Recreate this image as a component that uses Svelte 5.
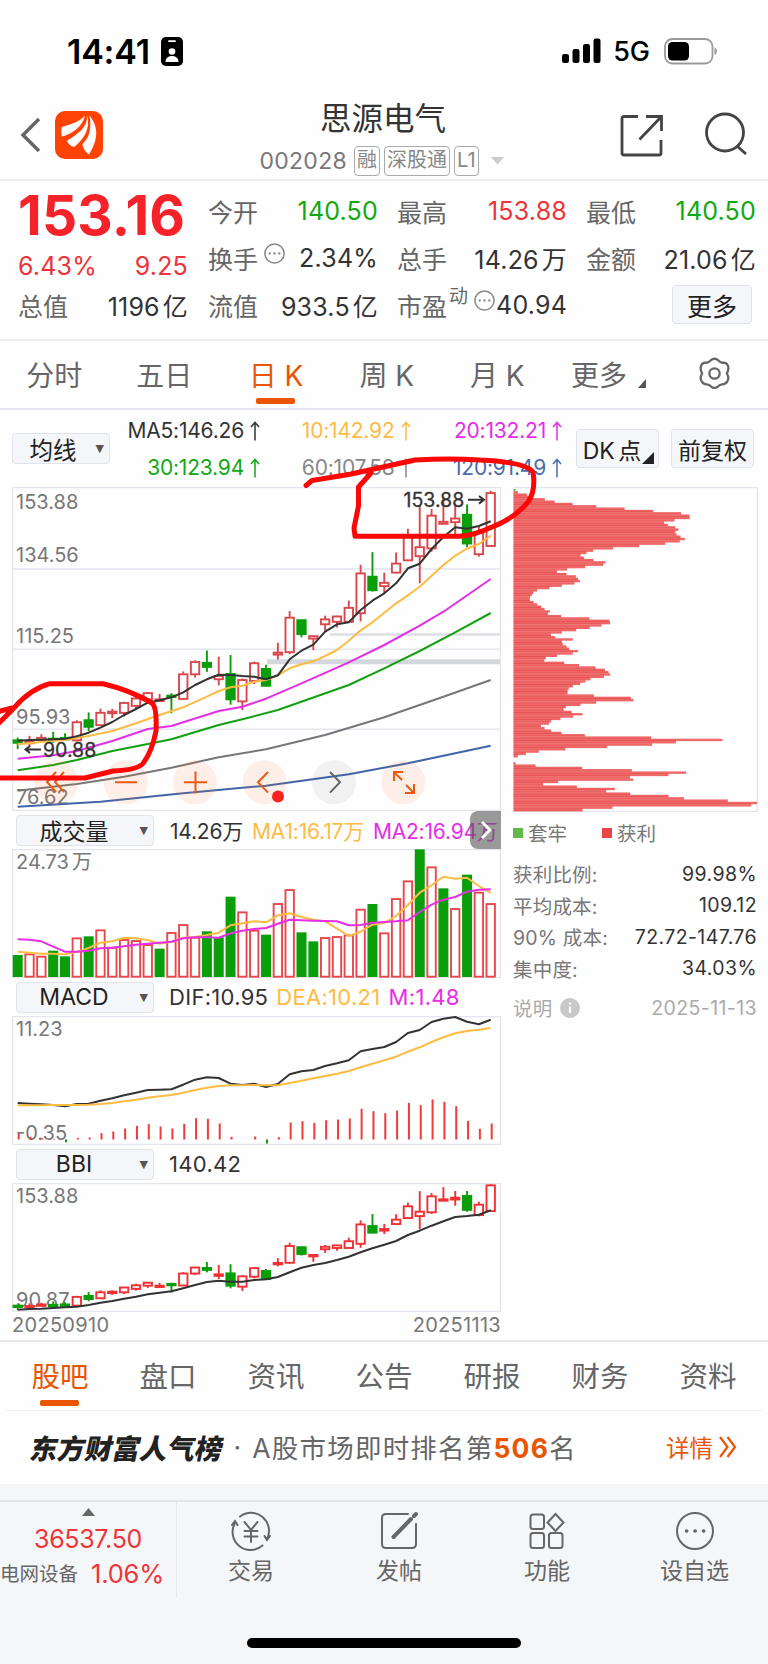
<script lang="ts">
  type Candle = [number, number, number, number, boolean];

  const STEP = 11.825;
  const X0 = 5.7;
  const CHART_W = 489;
  const TOP_PRICE = 153.88;

  let period = $state(2);
  let section = $state(0);

  const periods = ['分时', '五日', '日 K', '周 K', '月 K', '更多'];
  const sections = ['股吧', '盘口', '资讯', '公告', '研报', '财务', '资料'];

  // high, body top, body bottom, low, rising
  const candles: Candle[] = [
    [93.64, 93, 92.4, 90.88, false], [94.1, 92.8, 92.3, 91.5, true], [94.5, 93.6, 93.1, 92.9, true],
    [95.1, 93.4, 93.1, 92.4, false], [94.7, 93.6, 93.2, 93, false], [97.9, 97.4, 93, 92.7, true],
    [99.8, 97.9, 96.3, 95.2, false], [100.7, 99.7, 96.7, 96.6, true], [100.7, 100, 99.6, 98.4, true],
    [102.4, 102.1, 99.7, 98.8, true], [104, 103.2, 101.4, 100.6, true], [104.8, 104.5, 103, 101.9, true],
    [104.3, 103, 102.6, 102.4, true], [104.5, 103.9, 103.6, 99.6, false], [109.8, 109.1, 103.1, 103, true],
    [112.5, 112.1, 109.1, 108.3, true], [114.9, 111.9, 110.9, 109.7, false], [113.4, 108.7, 107.9, 106.4, true],
    [113.8, 109.2, 103, 101.7, false], [108.1, 107.7, 102.5, 100.4, true], [112.2, 111.8, 107.5, 106.7, true],
    [111.4, 110.4, 106.3, 106.1, false], [116.8, 114.4, 113.9, 112.7, true], [124.5, 122.9, 114.5, 114, true],
    [122.3, 122.3, 118.9, 118.1, false], [118.5, 118.4, 117.8, 115, true], [123.4, 122.5, 121.3, 119.4, true],
    [123.4, 123.2, 121.9, 120.5, true], [127.1, 125.3, 121.9, 121.7, true], [135.8, 133.7, 124, 122, true],
    [138.9, 132.9, 129.6, 129.3, false], [133.9, 131.4, 130.6, 128.9, true], [138.8, 136.1, 133.9, 133.7, true],
    [144.6, 142.8, 136.9, 136.7, true], [150.4, 140.1, 137.9, 131.3, true], [149.4, 147.8, 139.8, 139, true],
    [152.4, 146.3, 145.8, 145.7, true], [150.5, 147.1, 146.2, 143.1, true], [150.5, 148, 141, 140.1, false],
    [145.1, 143.6, 138.4, 137.8, true], [153.88, 153.3, 140.4, 140.2, true],
  ];

  const ma5 = [253.7, 253, 252.7, 252.3, 251.7, 249.3, 245.7, 240.7, 235, 228, 222, 215.7, 213.3, 210.3, 205.3, 198, 192.3, 187.7, 188, 189, 189.7, 192.3, 188.3, 172.3, 163.7, 157.7, 144.7, 137.3, 135.3, 123, 113.7, 106.3, 96.3, 81.3, 76.7, 62, 50, 40.3, 41.7, 39, 34.3];
  const ma10 = [[0, 257.3], [2, 255], [4, 253], [6, 249], [8, 244], [10, 236.3], [12, 228], [14, 220.3], [16, 209.7], [17, 204], [18, 200.3], [19, 198.7], [20, 194.7], [21, 193], [22, 188.3], [23, 181.3], [24, 177.3], [25, 174.3], [26, 169], [27, 163], [28, 153.7], [29, 143.3], [30, 135.3], [31, 125.7], [32, 116.3], [33, 108.3], [34, 99.7], [35, 88.7], [36, 78], [37, 68.7], [38, 61.7], [39, 57], [40, 48.7]];
  const ma20 = [[0, 271.7], [3, 268.3], [5, 264], [8, 254], [11, 242], [13, 239], [17, 224], [19, 219.7], [21, 211.7], [24, 196.3], [28, 175.3], [31, 158], [34, 138.7], [36, 124.7], [40, 92]];
  const ma30 = [[0, 283.3], [3, 278], [5, 273], [8, 264], [11, 257], [13, 252.3], [17, 238], [19, 232.3], [22, 223], [28, 198], [31, 181.3], [34, 164], [37, 145.3], [40, 126]];
  const ma60 = [[0, 303.7], [5, 297], [9, 289.7], [13, 280.7], [17, 270.3], [21, 262.3], [26, 248], [31, 230.3], [36, 209.7], [40, 193]];
  const ma120 = [[0, 319.7], [7, 314.7], [14, 306.3], [21, 298.7], [28, 287.3], [33, 276.3], [40, 258.7]];

  const volumes = [66, 70, 63, 79, 62, 118, 122, 142, 90, 113, 110, 98, 85, 134, 158, 120, 137, 119, 241, 196, 141, 127, 221, 263, 134, 107, 119, 122, 127, 204, 219, 133, 236, 289, 383, 331, 266, 206, 307, 255, 221];
  const volDown = [0, 3, 4, 6, 12, 16, 17, 18, 21, 24, 25, 30, 34, 36, 38];
  const volMa1 = [427, 430, 433, 433, 435, 428, 416, 400, 396, 385, 387, 392, 403, 397, 385, 383, 377, 370, 348, 342, 336, 339, 318, 312, 323, 331, 336, 358, 380, 367, 346, 341, 320, 287, 250, 228, 202, 208, 205, 230, 251];
  const volMa2 = [390, 391, 396, 412, 427, 427, 424, 417, 415, 411, 406, 403, 400, 397, 387, 384, 384, 385, 372, 364, 359, 356, 343, 331, 333, 334, 335, 336, 348, 347, 340, 338, 336, 333, 308, 286, 271, 263, 247, 241, 240];

  const dif = [371, 373, 375, 377, 381, 374, 373, 364, 357, 348, 340, 332, 331, 330, 316, 301, 294, 296, 313, 317, 313, 323, 314, 285, 276, 272, 260, 252, 243, 216, 209, 203, 188, 161, 152, 128, 118, 113, 127, 135, 121];
  const dea = [378, 378, 378, 377, 377, 377, 376, 374, 371, 366, 361, 355, 351, 347, 340, 332, 325, 320, 318, 318, 317, 318, 318, 311, 304, 297, 290, 283, 275, 264, 253, 243, 232, 217, 204, 188, 174, 162, 155, 151, 146];
  const macd = [18, 8, 4, 2, -8, 5, 6, 19, 24, 33, 41, 46, 39, 33, 47, 64, 62, 48, 8, 0, 9, -12, 7, 51, 55, 50, 58, 60, 63, 92, 85, 79, 87, 110, 103, 120, 113, 100, 56, 32, 48];
  const bbi = [482, 480, 479, 477, 475, 473, 468, 461, 456, 449, 443, 436, 431, 427, 418, 408, 399, 395, 398, 398, 393, 391, 384, 370, 356, 348, 342, 333, 323, 310, 298, 287, 276, 258, 245, 230, 217, 204, 201, 197, 184];

  // cost distribution, one row per price level
  const chips = [
    13, 40, 53, 94, 123, 177, 248, 333, 419, 503, 528, 529, 483, 452, 463, 485, 495, 485, 489, 501, 514, 499, 455, 377, 299,
    239, 219, 201, 211, 240, 276, 269, 215, 161, 130, 159, 187, 193, 199, 183, 145, 108, 71, 60, 55, 49, 49, 60, 71, 83, 93,
    109, 103, 143, 228, 288, 290, 264, 229, 188, 145, 112, 124, 178, 145, 148, 159, 167, 193, 178, 131, 97, 92, 152, 197,
    246, 274, 285, 290, 271, 231, 216, 200, 178, 166, 162, 162, 241, 352, 360, 248, 201, 157, 150, 174, 207, 179, 141, 113,
    107, 82, 93, 113, 144, 214, 413, 627, 487, 416, 281, 156, 76, 37, 13, 0, 0, 6, 66, 206, 355, 518, 465, 349, 359, 134,
    89, 190, 304, 278, 350, 465, 511, 643, 731, 713, 297, 207,
  ];

  const costs = [
    ['获利比例:', '99.98%'],
    ['平均成本:', '109.12'],
    ['90% 成本:', '72.72-147.76'],
    ['集中度:', '34.03%'],
  ];

  const x = (i: number) => X0 + STEP * i;
  const poly = (pts: number[][]) => pts.map(([i, y]) => `${x(i).toFixed(1)},${y}`).join(' ');
  const series = (ys: number[], top: number) => ys.map((y, i) => `${x(i).toFixed(1)},${((y - top) / 3).toFixed(1)}`).join(' ');
</script>

{#snippet candleSet(k: number, offset: number)}
  {#each candles as [high, top, bottom, low, up], i}
    {@const yt = offset + (TOP_PRICE - top) * k}
    {@const yb = offset + (TOP_PRICE - bottom) * k}
    <g class={up ? 'up' : 'down'}>
      <line x1={x(i)} x2={x(i)} y1={offset + (TOP_PRICE - high) * k} y2={yt} />
      <line x1={x(i)} x2={x(i)} y1={yb} y2={offset + (TOP_PRICE - low) * k} />
      <rect x={x(i) - 4.2} y={yt} width="8.4" height={Math.max(yb - yt, 1.4)} />
    </g>
  {/each}
{/snippet}

{#snippet dots()}
  <svg class="dots" viewBox="0 0 24 24"><circle cx="12" cy="12" r="10" /><path d="M7 12h.1M12 12h.1M17 12h.1" /></svg>
{/snippet}

{#snippet rise()}
  <svg class="rise" viewBox="0 0 10 20"><path d="M5 19.500V1.500M1 6l4-4.500L9 6" /></svg>
{/snippet}

<div class="phone">
  <div class="status">
    <span class="clock">14:41</span>
    <svg class="badge" width="22" height="29" viewBox="0 0 22 29">
      <rect width="22" height="29" rx="5" />
      <path d="M8 4.200h6" stroke="#fff" stroke-width="1.800" stroke-linecap="round" />
      <circle cx="11" cy="14.500" r="3.300" fill="#fff" />
      <path d="M4.500 25c0-4 3-6 6.500-6s6.500 2 6.500 6z" fill="#fff" />
    </svg>
    <svg class="signal" width="39" height="26" viewBox="0 0 39 26">
      <rect x="0" y="16" width="7" height="9" rx="2.200" />
      <rect x="10.500" y="11" width="7" height="14" rx="2.200" />
      <rect x="21" y="6" width="7" height="19" rx="2.200" />
      <rect x="31.500" y="0.500" width="7" height="24.500" rx="2.200" />
    </svg>
    <span class="net">5G</span>
    <svg width="54" height="27" viewBox="0 0 54 27">
      <rect x="1" y="1" width="47.500" height="24.500" rx="7.500" fill="none" stroke="#999" stroke-width="1.800" />
      <rect x="4" y="4" width="21" height="18.500" rx="4.500" />
      <path d="M50.500 9.500c3.200 1 3.200 6.500 0 7.500z" fill="#999" />
    </svg>
  </div>

  <header>
    <svg class="back" width="22" height="36" viewBox="0 0 22 36"><path d="M19 2L3 18l16 16" /></svg>
    <svg class="logo" width="48" height="48" viewBox="0 0 48 48">
      <rect width="48" height="48" rx="10" fill="#ff4306" />
      <path d="M30 4.500C25 11 13 14 7 16c-1 3-1 6 0 9.500C16 23 27 17 30 4.500z" fill="#fff" />
      <path d="M32 4.500c1 11-9 19-20 25 1 3 3 5.500 7 6.500C28 29 36 18 32 4.500z" fill="#fff" />
      <path d="M34.500 4.500C37 18 34 27 27.500 33c0 4 3 8 6.500 10.500 8-13 11-26 .500-39z" fill="#fff" />
    </svg>
    <div class="title">
      <h1>思源电气</h1>
      <div class="code">
        <span>002028</span>
        <i class="tag">融</i>
        <i class="tag">深股通</i>
        <i class="tag">L1</i>
        <svg width="13" height="8" viewBox="0 0 13 8"><path d="M0 0h13L6.500 7.500z" fill="#ccc" /></svg>
      </div>
    </div>
    <svg class="share" width="44" height="44" viewBox="0 0 44 44">
      <path d="M18 2.500H4q-2 0-2 2V39q0 2 2 2h35q2 0 2-2V26M26 2.500h15.500V17M41 3L19.500 25.500" />
    </svg>
    <svg class="search" width="44" height="44" viewBox="0 0 44 44">
      <circle cx="21" cy="20.500" r="18.500" /><path d="M33 34l9 8" />
    </svg>
  </header>

  <section class="quote">
    <div class="last">
      <strong>153.16</strong>
      <div class="pair red change"><span>6.43%</span><span>9.25</span></div>
      <div class="pair"><label>总值</label><span>1196<b>亿</b></span></div>
    </div>
    <div class="stats">
      <div class="pair"><label>今开</label><span class="green">140.50</span></div>
      <div class="pair"><label>最高</label><span class="red">153.88</span></div>
      <div class="pair"><label>最低</label><span class="green">140.50</span></div>
      <div class="pair"><label>换手{@render dots()}</label><span>2.34%</span></div>
      <div class="pair"><label>总手</label><span>14.26<b>万</b></span></div>
      <div class="pair"><label>金额</label><span>21.06<b>亿</b></span></div>
      <div class="pair"><label>流值</label><span>933.5<b>亿</b></span></div>
      <div class="pair"><label>市盈<sup>动</sup>{@render dots()}</label><span>40.94</span></div>
      <div class="pair end"><button class="box more">更多</button></div>
    </div>
  </section>

  <nav class="periods">
    {#each periods as p, i}
      <button class:active={period === i} onclick={() => (period = i)}>
        {p}{#if i === 5}<svg class="corner" width="8" height="9" viewBox="0 0 8 9"><path d="M8 0v9H0z" /></svg>{/if}
      </button>
    {/each}
    <button aria-label="设置">
      <svg class="gear" width="33" height="33" viewBox="0 0 32 32">
        <path d="M12 3.500Q16 0 20 3.500q2 2.500 5 2 4 .5 4.500 5 0 3-1.500 5.500 2.500 4 .5 7.500-1.500 3-5 3-2.500 0-4 2Q16 31.500 12.500 28.500q-1.500-2-4-2-3.500 0-5-3-2-3.500.5-7.500-1.500-2.500-1.500-5.500.5-4.500 4.500-5 3 .5 5-2z" />
        <circle cx="16" cy="16" r="5" />
      </svg>
    </button>
  </nav>

  <div class="averages">
    <button class="box pick">均线<i class="tri">▼</i></button>
    <div class="ma">
      <span class="c5">MA5:146.26{@render rise()}</span>
      <span class="c10">10:142.92{@render rise()}</span>
      <span class="c20">20:132.21{@render rise()}</span>
      <span class="c30">30:123.94{@render rise()}</span>
      <span class="c60">60:107.58{@render rise()}</span>
      <span class="c120">120:91.49{@render rise()}</span>
    </div>
    <button class="box dk">DK 点<svg class="corner" width="12" height="12" viewBox="0 0 12 12"><path d="M12 0v12H0z" fill="#222" /></svg></button>
    <button class="box fq">前复权</button>
  </div>

  <main>
    <div class="charts">
      <svg class="chart" width={CHART_W} height="324" viewBox="0 0 489 324">
        <path class="grid" d="M.5.5h488v323H.5zM0 82h489M0 162.300h489M0 242.300h489" />
        <path d="M318 147.500h170" stroke="#dcdee6" stroke-width="2.500" />
        <path d="M255 174.700h233" stroke="#d5d7df" stroke-width="5" />
        <g class="labels">
          <text x="4" y="22">153.88</text>
          <text x="4" y="75">134.56</text>
          <text x="4" y="156">115.25</text>
          <text x="4" y="237">95.93</text>
          <text x="4" y="317">76.62</text>
        </g>
        {@render candleSet(4.1, 3.7)}
        <g class="lines">
          <polyline points={poly(ma120)} stroke="#4166a8" />
          <polyline points={poly(ma60)} stroke="#777" />
          <polyline points={poly(ma30)} stroke="#12a012" />
          <polyline points={poly(ma20)} stroke="#e52ee5" />
          <polyline points={poly(ma10)} stroke="#fcbc44" />
          <polyline points={ma5.map((y, i) => `${x(i)},${y}`).join(' ')} stroke="#333" />
        </g>
        <g class="marks">
          <text x="391.500" y="19.500">153.88</text>
          <path d="M456 12.800h15M467 9l5 3.800-5 3.800" />
          <text x="31" y="269.500">90.88</text>
          <path d="M29 262.500H14M18 259l-4.500 3.500 4.500 3.500" />
        </g>
        <g class="controls">
          {#each [44.3, 113.7, 183, 252.7, 322, 391.3] as cx, i}
            <circle {cx} cy="295.300" r="22" class:off={i === 4} />
          {/each}
          <path d="M44 285l-9 10 9 10M52 285l-9 10 9 10" />
          <path d="M103 295.300h22M172 295.300h23M183.500 284.500v22" />
          <path d="M256 285l-10 10.300 10 10.300" />
          <path class="next" d="M318 285l10 10.300-10 10.300" />
          <path d="M382 294v-9h9M382 285l8 8M402 297v9h-9M402 306l-8-8" />
          <circle cx="266" cy="309.500" r="6" class="dot" />
        </g>
      </svg>

      <div class="bar">
        <button class="box ind">成交量<i class="tri">▼</i></button>
        <span>14.26万</span><span class="c10">MA1:16.17万</span><span class="c20">MA2:16.94万</span>
        <div class="slide"><svg width="12" height="20" viewBox="0 0 12 20"><path d="M2 2l8 8-8 8" /></svg></div>
      </div>
      <svg class="chart" width={CHART_W} height="129" viewBox="0 0 489 129">
        <path class="grid" d="M.5.5h488v128H.5z" />
        <g class="labels"><text x="4" y="20">24.73</text><text x="60" y="20">万</text></g>
        {#each volumes as v, i}
          {@const down = volDown.includes(i)}
          <rect class={down ? 'vdown' : 'vup'} x={x(i) - (down ? 5 : 4.2)} y={128 - v / 3 + (down ? 0 : 0.7)} width={down ? 10 : 8.4} height={v / 3 - (down ? 0 : 1)} />
        {/each}
        <g class="lines">
          <polyline points={series(volMa1, 119)} stroke="#fcbc44" />
          <polyline points={series(volMa2, 119)} stroke="#e52ee5" />
        </g>
      </svg>

      <div class="bar wide">
        <button class="box ind">MACD<i class="tri">▼</i></button>
        <span>DIF:10.95</span><span class="c10">DEA:10.21</span><span class="c20">M:1.48</span>
      </div>
      <svg class="chart" width={CHART_W} height="129" viewBox="0 0 489 129">
        <path class="grid" d="M.5.5h488v128H.5z" />
        <g class="labels"><text x="4" y="20">11.23</text><text x="4" y="124">-0.35</text></g>
        {#each macd as m, i}
          <line x1={x(i) + 1} x2={x(i) + 1} y1="123.500" y2={123.5 - m / 3} stroke={m > 0 ? '#ef3b3b' : '#0aa00a'} stroke-width="2" />
        {/each}
        <g class="lines">
          <polyline points={series(dif, 110)} stroke="#333" />
          <polyline points={series(dea, 110)} stroke="#fcbc44" />
        </g>
      </svg>

      <div class="bar wide">
        <button class="box ind">BBI<i class="tri">▼</i></button>
        <span>140.42</span>
      </div>
      <svg class="chart bbi" width={CHART_W} height="129" viewBox="0 0 489 129">
        <path class="grid" d="M.5.5h488v128H.5z" />
        <g class="labels"><text x="4" y="20">153.88</text><text x="4" y="124">90.87</text></g>
        {@render candleSet(1.995, 1.2)}
        <g class="lines"><polyline points={series(bbi, 102)} stroke="#333" /></g>
      </svg>
      <div class="dates"><span>20250910</span><span>20251113</span></div>
    </div>

    <aside>
      <svg width="245" height="325" viewBox="0 0 245 325">
        <path class="grid" d="M0 .5h244.500v324H0" />
        <rect x="0.500" y="2" width="2" height="2" fill="#5cc13f" />
        {#each chips as c, i}
          {@const y = 4.1 + i * 2.336}
          <rect x="0.500" {y} width={c / 3} height="2.400" fill="#ee6868" />
          <rect x="0.500" y={y + 1.7} width={Math.min(c, chips[i + 1] ?? c) / 3} height="0.700" fill="#e6484b" />
        {/each}
      </svg>
      <div class="legend"><i class="g"></i>套牢<i class="r"></i>获利</div>
      {#each costs as [name, value]}
        <div class="cost"><span>{name}</span><em>{value}</em></div>
      {/each}
      <div class="cost note"><span>说明 <svg width="20" height="20" viewBox="0 0 20 20"><circle cx="10" cy="10" r="10" fill="#c8c8c8" /><path d="M10 8.500V15M10 4.600v2" stroke="#fff" stroke-width="2.200" /></svg></span><em>2025-11-13</em></div>
    </aside>

    <svg class="ink" width="768" height="400" viewBox="0 440 768 400">
      <path d="M306 484.500L312 479.500L350 473.300L415 459Q450 457 480 459Q525 461 533 471Q536 490 528 501Q515 517 492 526Q475 534 460 535.300H355L354 527L358.500 505V486L371 472" />
      <path d="M-3 711L12 707M-3 724L14 707Q30 688 50 682.700H103Q130 689 152 702Q157 706 156 730Q152 750 144 761Q140 769 113 770L85 777H-3" />
    </svg>
  </main>

  <nav class="sections">
    {#each sections as s, i}
      <button class:active={section === i} onclick={() => (section = i)}>{s}</button>
    {/each}
  </nav>

  <div class="rank">
    <b>东方财富人气榜</b><span class="mid">·</span>
    <span>A股市场即时排名第<strong>506</strong>名</span>
    <a href="#rank">详情<svg width="19" height="22" viewBox="0 0 19 22"><path d="M2 1l7.500 10L2 21M9.500 1L17 11 9.500 21" /></svg></a>
  </div>

  <footer>
    <div class="dock">
      <div class="index">
        <svg width="13" height="8" viewBox="0 0 13 8"><path d="M0 8h13L6.500 0z" fill="#666" /></svg>
        <span class="points">36537.50</span>
        <div><small>电网设备</small><span class="pct">1.06%</span></div>
      </div>
      <a href="#trade">
        <svg width="44" height="40" viewBox="0 0 44 40">
          <path d="M11 5.500A18 18 0 0 1 38 28M41 25l-3 4-2.500-4M33.500 34.500A18 18 0 0 1 6 12M3 14l3-4 2.500 4" />
          <path d="M15.500 11l6.500 8 6.500-8M22 19v12M15.500 20h13M15.500 25.500h13" />
        </svg>
        交易
      </a>
      <a href="#post">
        <svg width="40" height="40" viewBox="0 0 40 40">
          <path d="M29 3H7q-4 0-4 4v26q0 4 4 4h26q4 0 4-4V13" />
          <path d="M14.500 26L32 8M35 5l2-2" stroke-width="4" />
        </svg>
        发帖
      </a>
      <a href="#tools">
        <svg width="40" height="40" viewBox="0 0 40 40">
          <rect x="3.500" y="3.500" width="13.500" height="14.500" rx="2.500" /><rect x="3.500" y="22" width="13.500" height="15" rx="2.500" />
          <rect x="22" y="22" width="13.500" height="15" rx="2.500" /><path d="M28.500 3l8 8.500-8 8.500-8-8.500z" />
        </svg>
        功能
      </a>
      <a href="#watch">
        <svg width="40" height="40" viewBox="0 0 40 40">
          <circle cx="20" cy="20" r="18" /><path d="M11.500 20h.2M20 20h.2M28.500 20h.2" stroke-width="3.600" />
        </svg>
        设自选
      </a>
    </div>
    <div class="home"></div>
  </footer>
</div>

<style>
  :global(body) {
    margin: 0;
    background: #fefefe;
  }
  .phone {
    width: 768px;
    height: 1664px;
    display: flex;
    flex-direction: column;
    overflow: hidden;
    background: #fefefe;
    color: #333;
    font-family: Inter, "Noto Sans CJK SC", sans-serif;
    white-space: nowrap;
  }
  .phone > * {
    flex: none;
    box-sizing: border-box;
  }
  svg {
    display: block;
    fill: none;
    flex: none;
  }
  button {
    font: inherit;
    color: inherit;
    background: none;
    border: 0;
    padding: 0;
  }
  a {
    color: inherit;
    text-decoration: none;
  }
  i, em {
    font-style: normal;
  }
  .red { color: #ee3338; }
  .green { color: #12a812; }
  .c10 { color: #fcbc44; }
  .c20 { color: #e52ee5; }
  .c30 { color: #12a812; }
  .c60 { color: #888; }
  .c120 { color: #4a6cab; }
  .box {
    box-sizing: border-box;
    background: #f5f6f9;
    border: 1.5px solid #e1e3ea;
    border-radius: 4px;
    color: #222;
    display: flex;
    align-items: center;
    justify-content: center;
    position: relative;
  }

  .status {
    height: 100px;
    padding: 2px 50px 0 67px;
    display: flex;
    align-items: center;
    color: #000;
  }
  .status svg { fill: #000; }
  .clock {
    font-size: 34px;
    font-weight: 600;
    letter-spacing: -0.2px;
    width: 94px;
  }
  .signal { margin-left: auto; }
  .net {
    font-size: 27px;
    font-weight: 500;
    margin: 0 14px 0 12px;
  }

  header {
    height: 81px;
    display: flex;
    border-bottom: 2px solid #efeff1;
    padding: 0 20px;
  }
  .back {
    margin: 17px 13px 0 0;
    stroke: #666;
    stroke-width: 3.5;
  }
  .logo { margin-top: 11px; }
  .title {
    flex: 1;
    padding-left: 1px;
    display: flex;
    flex-direction: column;
    align-items: center;
  }
  h1 {
    font-size: 31.5px;
    line-height: 38px;
    font-weight: 400;
    margin: 0 0 8px 42px;
  }
  .code {
    display: flex;
    align-items: center;
    gap: 4px;
    font-size: 23px;
    color: #777;
    margin-left: 39px;
  }
  .code span {
    letter-spacing: 0.3px;
    margin-right: 3px;
  }
  .code svg { margin-left: 8px; }
  .tag {
    box-sizing: border-box;
    height: 30px;
    line-height: 27px;
    border: 1.5px solid #aaa;
    border-radius: 4px;
    padding: 0 2px;
    font-size: 20px;
    color: #888;
  }
  .share, .search {
    stroke: #444;
    stroke-width: 2.8;
    margin-top: 14px;
  }
  .search { margin: 12px 0 0 40px; }

  .quote {
    height: 160px;
    border-bottom: 2px solid #efeff1;
    display: flex;
    padding: 6px 12px 0 18px;
    font-size: 25px;
  }
  .last {
    width: 170px;
    margin-right: 20px;
  }
  .last strong {
    display: block;
    font-size: 55px;
    line-height: 56px;
    height: 55px;
    letter-spacing: 0.2px;
    color: #f5222a;
  }
  .change {
    margin: 0 0 -8px;
  }
  .stats {
    flex: 1;
    display: grid;
    grid-template-columns: 170px 170px 170px;
    grid-auto-rows: 47px;
    column-gap: 19px;
  }
  .pair {
    height: 47px;
    display: flex;
    align-items: center;
    justify-content: space-between;
    letter-spacing: 0.2px;
  }
  .pair b {
    font-weight: 400;
    margin-left: 3px;
  }
  .pair label {
    color: #666;
    display: flex;
    align-items: center;
    letter-spacing: 0;
  }
  sup {
    font-size: 19px;
    line-height: 20px;
    margin: -16px 0 0 2px;
  }
  .dots {
    width: 23px;
    height: 23px;
    margin: -9px 0 0 5px;
    stroke: #888;
    stroke-width: 1.6;
    stroke-linecap: round;
  }
  .dots path { stroke-width: 2.4; }
  .end { justify-content: flex-end; }
  .more {
    width: 80px;
    height: 39px;
    margin-right: 4px;
  }

  .periods {
    height: 69px;
    border-bottom: 2px solid #e3e4eb;
    display: grid;
    grid-template-columns: 108.5px 111.500px 112px 109.500px 111.500px 92px 1fr;
    font-size: 28px;
    word-spacing: -3px;
    color: #666;
    padding-bottom: 2px;
  }
  .periods button {
    display: flex;
    align-items: center;
    justify-content: center;
    position: relative;
  }
  .active { color: #ea5504; }
  .active::after {
    content: "";
    position: absolute;
    left: calc(50% - 20px);
    bottom: 2px;
    width: 39px;
    height: 6px;
    border-radius: 2px;
    background: #ea5504;
  }
  .corner { fill: #555; }
  .periods .corner {
    position: absolute;
    right: -1px;
    bottom: 18px;
  }
  .gear {
    stroke: #666;
    stroke-width: 2.2;
    margin-left: 16px;
  }

  .averages {
    height: 77px;
    display: flex;
    padding-left: 12px;
  }
  .tri {
    font-family: "DejaVu Sans", sans-serif;
    font-size: 11px;
    color: #555;
    position: absolute;
    right: 5px;
  }
  .pick {
    width: 98px;
    height: 31px;
    margin-top: 23px;
    font-size: 23.5px;
    padding-right: 16px;
  }
  .ma {
    width: 453px;
    display: grid;
    grid-template-columns: 150px 150.500px 151.500px;
    grid-template-rows: 37px 37px;
    padding-top: 2px;
    font-size: 21px;
    letter-spacing: -0.2px;
  }
  .ma span {
    display: flex;
    align-items: center;
    justify-content: flex-end;
    gap: 6px;
  }
  .rise {
    width: 10px;
    height: 20px;
    stroke: currentColor;
    stroke-width: 1.5;
  }
  .dk, .fq {
    margin: 19px 0 0 13px;
    width: 83px;
    height: 39px;
    font-size: 23px;
  }
  .dk {
    padding-right: 11px;
    word-spacing: -3px;
  }
  .dk .corner {
    position: absolute;
    right: 4px;
    bottom: 3px;
  }
  .fq { margin-left: 12px; }

  main {
    height: 855px;
    border-bottom: 2px solid #e6e7ec;
    display: flex;
    padding: 0 12px 0;
    position: relative;
  }
  .charts { width: 489px; }
  .grid {
    stroke: #e4e5ee;
    stroke-width: 1.5;
  }
  .labels text, .marks text {
    fill: #777;
    font-size: 20px;
  }
  .marks text {
    fill: #333;
    stroke: #333;
    stroke-width: 0.3;
    font-size: 19.5px;
  }
  .marks path {
    stroke: #333;
    stroke-width: 2;
  }
  .lines polyline {
    stroke-width: 2;
    stroke-linejoin: round;
  }
  .up line, .up rect { stroke: #d8484c; stroke-width: 1.9; }
  .up rect { fill: #fefefe; }
  .down line, .down rect { stroke: #0a9e0a; stroke-width: 1.9; }
  .down rect { fill: #0a9e0a; }
  .bbi .up line, .bbi .up rect { stroke: #ef3034; }
  .vup {
    fill: #fefefe;
    stroke: #e8484c;
    stroke-width: 1.9;
  }
  .vdown { fill: #0a9e0a; }
  .controls circle { fill: rgba(245, 110, 50, 0.11); }
  .controls circle.off { fill: rgba(90, 90, 90, 0.08); }
  .controls circle.dot { fill: #f5221e; }
  .controls path {
    stroke: #ea5a14;
    stroke-width: 2;
  }
  .controls .next { stroke: #666; }
  .bar {
    height: 38px;
    display: flex;
    align-items: center;
    gap: 9px;
    padding-left: 4px;
    font-size: 21px;
    letter-spacing: -0.2px;
    position: relative;
  }
  .wide {
    font-size: 22px;
    letter-spacing: 0.3px;
    gap: 8px;
  }
  .ind {
    width: 138px;
    height: 31px;
    margin-right: 7px;
    font-size: 23px;
    letter-spacing: 0;
    padding-right: 22px;
  }
  .slide {
    position: absolute;
    right: 0;
    top: 0;
    width: 31px;
    height: 38px;
    border-radius: 8px 0 0 8px;
    background: rgba(90, 90, 90, 0.62);
    display: flex;
    align-items: center;
    justify-content: center;
  }
  .slide path { stroke: #fff; stroke-width: 3; }
  .dates {
    display: flex;
    justify-content: space-between;
    font-size: 20px;
    letter-spacing: 0.3px;
    line-height: 27px;
    color: #777;
  }
  aside {
    width: 244px;
    margin-left: 12px;
    font-size: 19.5px;
    color: #777;
  }
  .legend {
    height: 41px;
    display: flex;
    align-items: center;
  }
  .legend i {
    width: 10px;
    height: 10px;
    margin-right: 5px;
    background: #5fba46;
  }
  .legend .r {
    margin-left: 35px;
    background: #ea4548;
  }
  .cost {
    height: 31.5px;
    display: flex;
    align-items: center;
    justify-content: space-between;
    letter-spacing: 0.2px;
  }
  .legend + .cost { margin-top: 5px; }
  .cost em {
    color: #333;
    letter-spacing: 0.4px;
  }
  .note {
    margin-top: 8px;
  }
  .note, .note em { color: #aaa; }
  .note span {
    display: flex;
    gap: 8px;
    align-items: center;
  }
  .ink {
    position: absolute;
    left: 0;
    top: -46px;
    pointer-events: none;
    stroke: #fd0606;
    stroke-width: 5;
    stroke-linecap: round;
    stroke-linejoin: round;
  }

  .sections {
    height: 69px;
    margin: 0 6px;
    border-bottom: 1.5px solid #eeeff3;
    display: grid;
    grid-template-columns: repeat(7, 108px);
    font-size: 28.500px;
    color: #666;
    padding-bottom: 2px;
  }
  .sections button {
    position: relative;
    padding-bottom: 2px;
  }
  .rank {
    height: 73px;
    display: flex;
    align-items: center;
    padding: 0 31px 2px 31px;
    font-size: 26.500px;
    color: #666;
  }
  .rank b {
    font-weight: 900;
    font-size: 27.500px;
    color: #222;
    transform: skewX(-12deg);
  }
  .rank .mid { margin: 0 10px 0 10px; }
  .rank span { letter-spacing: 1.2px; }
  .rank strong { color: #ea5504; }
  .rank a {
    margin-left: auto;
    display: flex;
    align-items: center;
    gap: 5px;
    font-size: 23.500px;
    color: #ea5504;
  }
  .rank a svg { stroke: #ea5504; stroke-width: 2.2; }

  footer {
    flex: 1 !important;
    background: #f5f6f8;
    padding-top: 16px;
  }
  .dock {
    height: 96px;
    border-top: 2px solid #e2e4ea;
    display: grid;
    grid-template-columns: 177px 148px 148px 148px 147px;
  }
  .index {
    border-right: 1.5px solid #e6e8ec;
    display: flex;
    flex-direction: column;
    align-items: center;
    padding-top: 6px;
    color: #f0353a;
  }
  .points {
    font-size: 25px;
    line-height: 30px;
    margin-top: 8px;
    letter-spacing: -0.3px;
  }
  .index div {
    display: flex;
    align-items: center;
    align-self: stretch;
    line-height: 34px;
    margin-top: 3px;
  }
  small {
    font-size: 19.500px;
    color: #666;
    width: 91px;
  }
  .pct {
    font-size: 25.5px;
    letter-spacing: -0.2px;
  }
  .dock a {
    display: flex;
    flex-direction: column;
    align-items: center;
    padding-top: 9px;
    font-size: 23px;
    line-height: 34px;
    gap: 3px;
    color: #666;
  }
  .dock a svg {
    stroke: #666;
    stroke-width: 2;
    stroke-linecap: round;
  }
  .home {
    width: 274px;
    height: 10px;
    border-radius: 5px;
    background: #000;
    margin: 40px auto 0;
  }
</style>
